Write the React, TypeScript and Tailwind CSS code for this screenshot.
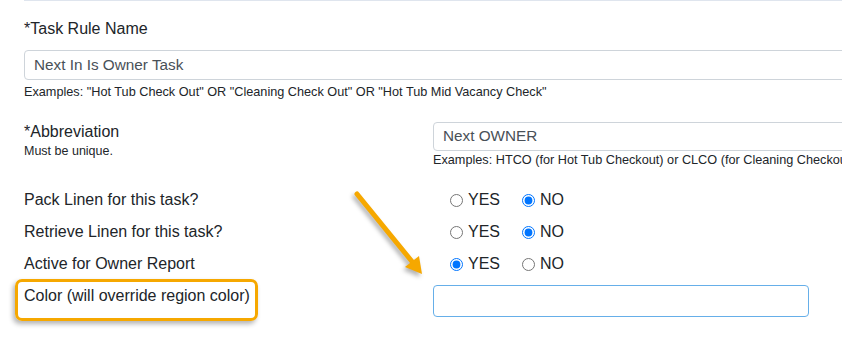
import React from "react";

const RadioPair = ({ name, yes }: { name: string; yes: boolean }) => (
    <div className="flex items-center h-[32px] pl-[17px] text-[16px]">
        <label className="flex items-center gap-[5px]">
            <input type="radio" name={name} defaultChecked={yes} className="m-0 w-[13px] h-[13px]" />
            <span>YES</span>
        </label>
        <label className="flex items-center gap-[5px] ml-[22px]">
            <input type="radio" name={name} defaultChecked={!yes} className="m-0 w-[13px] h-[13px]" />
            <span>NO</span>
        </label>
    </div>
);

export default function App() {
    const rows = [
        { label: "Pack Linen for this task?", name: "pack", yes: false },
        { label: "Retrieve Linen for this task?", name: "retrieve", yes: false },
        { label: "Active for Owner Report", name: "owner", yes: true },
    ];

    return (
        <div className="relative w-[842px] h-[338px] overflow-hidden bg-white text-[#212529] font-['Liberation_Sans',Arial,sans-serif]">
            {/* bottom edge of the field above */}
            <div className="ml-[24px] h-px bg-[#dfe5ee]" />

            {/* Task rule name */}
            <div className="pl-[24px] pt-[16px]">
                <div className="text-[16px] leading-[24px]">*Task Rule Name</div>
                <div className="mt-[9px] w-[900px] h-[30px] border border-[#ced4da] rounded-[4px] flex items-center px-[9px] text-[15.3px] text-[#495057]">
                    Next In Is Owner Task
                </div>
                <div className="mt-[4px] text-[12.7px] leading-[16px] whitespace-nowrap">
                    Examples: "Hot Tub Check Out" OR "Cleaning Check Out" OR "Hot Tub Mid Vacancy Check"
                </div>
            </div>

            {/* Abbreviation */}
            <div className="grid grid-cols-[409px_1fr] pl-[24px] mt-[20px]">
                <div>
                    <div className="text-[16px] leading-[24px]">*Abbreviation</div>
                    <div className="text-[12.5px] leading-[16px] -mt-[1px]">Must be unique.</div>
                </div>
                <div className="pt-[2px]">
                    <div className="w-[500px] h-[29px] border border-[#ced4da] rounded-[4px] flex items-center px-[9px] text-[15.3px] text-[#495057]">
                        Next OWNER
                    </div>
                    <div className="mt-[1px] text-[12.7px] leading-[16px] whitespace-nowrap">
                        Examples: HTCO (for Hot Tub Checkout) or CLCO (for Cleaning Checkout)
                    </div>
                </div>
            </div>

            {/* Yes / No rows */}
            <div className="mt-[16px] pl-[24px]">
                {rows.map((r) => (
                    <div key={r.name} className="grid grid-cols-[409px_1fr] items-center">
                        <div className="text-[16px] leading-[32px]">{r.label}</div>
                        <RadioPair name={r.name} yes={r.yes} />
                    </div>
                ))}
                <div className="grid grid-cols-[409px_1fr] items-start">
                    <div className="text-[16px] leading-[24px] pt-[4px]">Color (will override region color)</div>
                    <div className="pt-[5px]">
                        <div className="w-[376px] h-[32px] border border-[#66afe9] rounded-[4px]" />
                    </div>
                </div>
            </div>

            {/* annotation box */}
            <div className="absolute left-[15px] top-[279px] w-[243px] h-[42px] border-[3px] border-[#f6a800] rounded-[7px] shadow-[-2px_3px_5px_rgba(0,0,0,0.3)]" />

            {/* annotation arrow */}
            <svg className="absolute left-[340px] top-[180px] drop-shadow-[-2px_3px_2px_rgba(0,0,0,0.3)]" width="100" height="100" viewBox="0 0 100 100">
                <line x1="17" y1="14" x2="74" y2="84" stroke="#f6a800" strokeWidth="5" strokeLinecap="round" />
                <polygon points="82,94 65,87 79,76" fill="#f6a800" />
            </svg>
        </div>
    );
}
